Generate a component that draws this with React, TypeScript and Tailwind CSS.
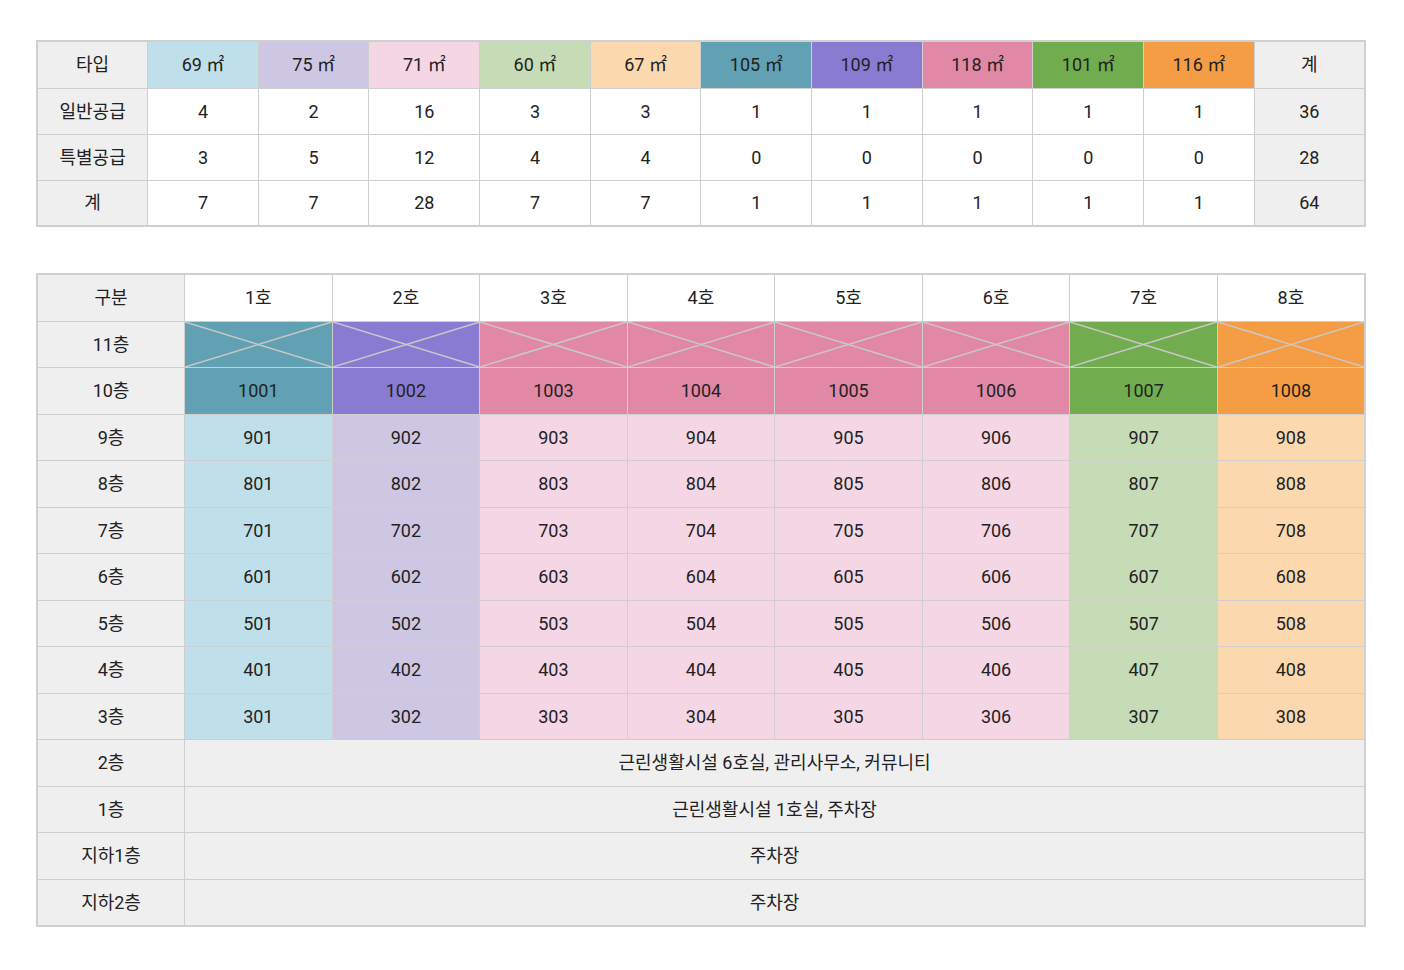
import React from "react";

const light = ["bg-[#bfe0ea]","bg-[#cdc7e3]","bg-[#f5d6e5]","bg-[#c6dcb7]","bg-[#fbd8ad]"];
const t1 = [
  {l:"69 ㎡",c:"bg-[#bfe0ea]"},{l:"75 ㎡",c:"bg-[#cdc7e3]"},{l:"71 ㎡",c:"bg-[#f5d6e5]"},{l:"60 ㎡",c:"bg-[#c6dcb7]"},{l:"67 ㎡",c:"bg-[#fbd8ad]"},
  {l:"105 ㎡",c:"bg-[#62a0b4]"},{l:"109 ㎡",c:"bg-[#8a7bd2]"},{l:"118 ㎡",c:"bg-[#e188a6]"},{l:"101 ㎡",c:"bg-[#71ad4f]"},{l:"116 ㎡",c:"bg-[#f59d45]"},
];
const rows1: [string,(string|number)[]][] = [
  ["일반공급",[4,2,16,3,3,1,1,1,1,1,36]],
  ["특별공급",[3,5,12,4,4,0,0,0,0,0,28]],
  ["계",[7,7,28,7,7,1,1,1,1,1,64]],
];
const dark = ["bg-[#62a0b4]","bg-[#8a7bd2]","bg-[#e188a6]","bg-[#e188a6]","bg-[#e188a6]","bg-[#e188a6]","bg-[#71ad4f]","bg-[#f59d45]"];
const lc = ["bg-[#bfe0ea]","bg-[#cdc7e3]","bg-[#f5d6e5]","bg-[#f5d6e5]","bg-[#f5d6e5]","bg-[#f5d6e5]","bg-[#c6dcb7]","bg-[#fbd8ad]"];
const td = "border border-[#cfcfcf] text-center align-middle";
const head = "bg-[#efefef]";

export default function App() {
  void light;
  return (
    <div className="w-[1404px] h-[970px] bg-white text-[#222] text-[18px]" style={{fontFamily:"Roboto, 'Noto Sans CJK KR', sans-serif"}}>
      <div className="pl-[36px] pt-[40px] w-[1366px]">
        <table className="w-[1330px] border-collapse table-fixed border-2 border-[#d0d0d0]">
          <tbody>
            <tr className="h-[47px]">
              <td className={`${td} ${head}`}>타입</td>
              {t1.map((t,i)=><td key={i} className={`${td} ${t.c}`}>{t.l}</td>)}
              <td className={`${td} ${head}`}>계</td>
            </tr>
            {rows1.map(([h,v],ri)=>(
              <tr key={ri} className="h-[46px]">
                <td className={`${td} ${head}`}>{h}</td>
                {v.map((x,i)=><td key={i} className={`${td} ${i===10?head:"bg-white"}`}>{x}</td>)}
              </tr>
            ))}
          </tbody>
        </table>
        <table className="mt-[46px] w-[1330px] border-collapse table-fixed border-2 border-[#d0d0d0]">
          <tbody>
            <tr className="h-[47px]">
              <td className={`${td} ${head}`}>구분</td>
              {[1,2,3,4,5,6,7,8].map(n=><td key={n} className={`${td} bg-white`}>{n}호</td>)}
            </tr>
            <tr className="h-[46px]">
              <td className={`${td} ${head}`}>11층</td>
              {dark.map((c,i)=>(
                <td key={i} className={`${td} ${c} relative p-0`}>
                  <svg className="absolute inset-0 w-full h-full" viewBox="0 0 100 100" preserveAspectRatio="none">
                    <line x1="0" y1="0" x2="100" y2="100" stroke="#c8c8c8" strokeWidth="1.5" vectorEffect="non-scaling-stroke"/>
                    <line x1="100" y1="0" x2="0" y2="100" stroke="#c8c8c8" strokeWidth="1.5" vectorEffect="non-scaling-stroke"/>
                  </svg>
                </td>
              ))}
            </tr>
            <tr className="h-[47px]">
              <td className={`${td} ${head}`}>10층</td>
              {dark.map((c,i)=><td key={i} className={`${td} ${c}`}>{1001+i}</td>)}
            </tr>
            {[9,8,7,6,5,4,3].map(f=>(
              <tr key={f} className="h-[46.5px]">
                <td className={`${td} ${head}`}>{f}층</td>
                {lc.map((c,i)=><td key={i} className={`${td} ${c}`}>{f*100+i+1}</td>)}
              </tr>
            ))}
            {[["2층","근린생활시설 6호실, 관리사무소, 커뮤니티"],["1층","근린생활시설 1호실, 주차장"],["지하1층","주차장"],["지하2층","주차장"]].map(([a,b])=>(
              <tr key={a} className="h-[46.5px]">
                <td className={`${td} ${head}`}>{a}</td>
                <td colSpan={8} className={`${td} ${head}`}>{b}</td>
              </tr>
            ))}
          </tbody>
        </table>
      </div>
    </div>
  );
}
